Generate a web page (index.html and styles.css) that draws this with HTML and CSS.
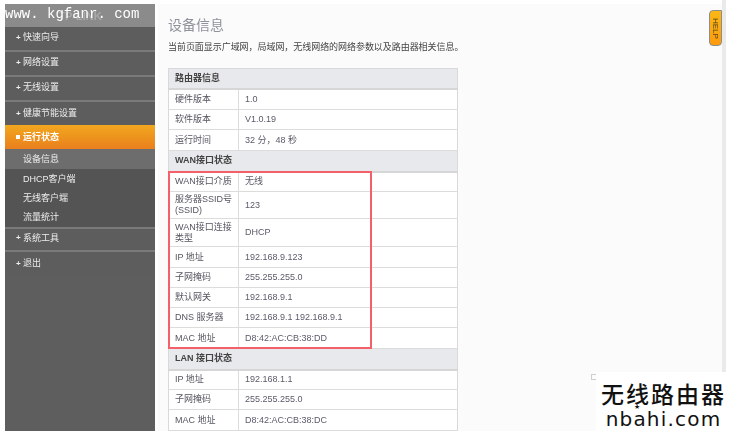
FILE: index.html
```html
<!DOCTYPE html>
<html lang="zh-CN">
<head>
<meta charset="utf-8">
<title>设备信息</title>
<link rel="stylesheet" href="styles.css">
</head>
<body>
<div class="page">
  <nav class="sidebar">
    <div class="brand"><span class="brand-logo">TP-LINK</span></div>
    <a class="nav-item"><i class="plus">+</i>快速向导</a>
    <a class="nav-item"><i class="plus">+</i>网络设置</a>
    <a class="nav-item"><i class="plus">+</i>无线设置</a>
    <a class="nav-item short"><i class="plus">+</i>健康节能设置</a>
    <a class="nav-item active"><i class="square"></i>运行状态</a>
    <a class="sub-item current">设备信息</a>
    <div class="sub-list">
      <a class="sub-item">DHCP客户端</a>
      <a class="sub-item">无线客户端</a>
      <a class="sub-item">流量统计</a>
    </div>
    <a class="nav-item tools"><i class="plus">+</i>系统工具</a>
    <a class="nav-item last"><i class="plus">+</i>退出</a>
  </nav>
  <main class="content">
    <h1 class="title">设备信息</h1>
    <p class="desc">当前页面显示广域网，局域网，无线网络的网络参数以及路由器相关信息。</p>
    <table class="info">
      <colgroup><col class="col-key"><col></colgroup>
      <tr class="head h20"><th colspan="2">路由器信息</th></tr>
      <tr class="h21"><td>硬件版本</td><td>1.0</td></tr>
      <tr class="h20"><td>软件版本</td><td>V1.0.19</td></tr>
      <tr class="h21"><td>运行时间</td><td>32 分，48 秒</td></tr>
      <tr class="head h21"><th colspan="2">WAN接口状态</th></tr>
      <tr class="h20"><td>WAN接口介质</td><td>无线</td></tr>
      <tr class="h27"><td>服务器SSID号<br>(SSID)</td><td>123</td></tr>
      <tr class="h28"><td>WAN接口连接<br>类型</td><td>DHCP</td></tr>
      <tr class="h21"><td>IP 地址</td><td>192.168.9.123</td></tr>
      <tr class="h20"><td>子网掩码</td><td>255.255.255.0</td></tr>
      <tr class="h20"><td>默认网关</td><td>192.168.9.1</td></tr>
      <tr class="h20"><td>DNS 服务器</td><td>192.168.9.1 192.168.9.1</td></tr>
      <tr class="h21"><td>MAC 地址</td><td>D8:42:AC:CB:38:DD</td></tr>
      <tr class="head h21"><th colspan="2">LAN 接口状态</th></tr>
      <tr class="h20"><td>IP 地址</td><td>192.168.1.1</td></tr>
      <tr class="h20"><td>子网掩码</td><td>255.255.255.0</td></tr>
      <tr class="h21"><td>MAC 地址</td><td>D8:42:AC:CB:38:DC</td></tr>
    </table>
  </main>
  <div class="strip"></div>
</div>
<div class="watermark">www. kgfanr. com</div>
<div class="highlight"></div>
<div class="help"><span>HELP</span></div>
<div class="checkbox"></div>
<div class="logo">
  <div class="logo-cn">无线路由器</div>
  <div class="logo-en">nbahi.com<span class="logo-star">★</span></div>
</div>
</body>
</html>
```
FILE: styles.css
```css
* { box-sizing: border-box; }
html, body { margin: 0; padding: 0; }
body {
  width: 731px;
  height: 434px;
  overflow: hidden;
  position: relative;
  background: #fff;
  font-family: "Liberation Sans", "Noto Sans CJK SC", sans-serif;
  font-size: 9px;
  color: #555;
  filter: blur(0.35px);
}
.page {
  display: flex;
  height: 434px;
  padding: 4px 0 3px 5px;
}
.sidebar {
  width: 150px;
  flex: none;
  display: flex;
  flex-direction: column;
  background: #5e5e5e;
  color: #ececec;
}
.brand {
  height: 23px;
  background: #8b8b8b;
  display: flex;
  align-items: center;
  justify-content: center;
  flex: none;
}
.brand-logo { color: #a9a9a9; font-size: 11px; font-weight: bold; }
.nav-item {
  height: 25px;
  flex: none;
  display: flex;
  align-items: center;
  padding: 0 0 2px 11px;
  background: #5d5d5d;
  border-bottom: 2px solid #7a7a7a;
  line-height: 1;
}
.nav-item.short { height: 23px; border-bottom: 0; padding-bottom: 0; }
.plus {
  width: 7px;
  font-style: normal;
  font-weight: bold;
  font-size: 8px;
  color: #eee;
}
.square {
  width: 4px;
  height: 4px;
  margin-right: 3px;
  background: #fff;
}
.nav-item.active {
  height: 24px;
  border-bottom: 0;
  padding-bottom: 0;
  background: linear-gradient(#f2a81e, #e97f1d);
  color: #fff;
  font-weight: bold;
}
.sub-item {
  height: 19px;
  display: flex;
  align-items: center;
  padding-left: 18px;
}
.sub-item.current {
  height: 20px;
  flex: none;
  padding-bottom: 2px;
  background: #6d6d6d;
}
.sub-list {
  background: #545454;
  height: 58px;
  flex: none;
}
.nav-item.tools { border-top: 2px solid #7a7a7a; height: 25px; padding-bottom: 3px; }
.nav-item.last { border-bottom: 0; height: 23px; padding-bottom: 0; }
.content {
  width: 564px;
  margin-left: 3px;
  flex: none;
  background: #fbfbfb;
  padding: 0 0 0 10px;
}
.title {
  margin: 12px 0 0;
  font-size: 14px;
  line-height: 18px;
  font-weight: normal;
  color: #8f929a;
}
.desc {
  margin: 7px 0 0;
  line-height: 12px;
  color: #444;
  letter-spacing: -0.05px;
  white-space: nowrap;
}
.info {
  margin-top: 15px;
  width: 290px;
  border-collapse: collapse;
  table-layout: fixed;
  background: #fff;
  border: 1px solid #d9d9d9;
}
.col-key { width: 70px; }
.info th, .info td {
  padding: 0 0 0 6px;
  font-weight: normal;
  text-align: left;
  line-height: 11px;
  border-bottom: 1px solid #dcdcdc;
}
.info td:first-child { border-right: 1px solid #dcdcdc; color: #555560; }
.info td + td { color: #5b5b6a; }
.info .head th {
  background: #e8e9ec;
  font-weight: bold;
  color: #444;
  border-bottom: 2px solid #d6d6d6;
}
.h20 { height: 20px; }
.h21 { height: 21px; }
.h27 { height: 27px; }
.h28 { height: 28px; }
.strip {
  width: 4px;
  flex: none;
  margin: -4px 0 -3px;
  background: #eaeaea;
}
.watermark {
  position: absolute;
  left: 5px;
  top: 6px;
  font-family: "Liberation Mono", monospace;
  font-size: 14px;
  line-height: 17px;
  color: #fff;
  white-space: nowrap;
}
.highlight {
  position: absolute;
  left: 168px;
  top: 171px;
  width: 204px;
  height: 178px;
  border: 2px solid #f4606a;
}
.help {
  position: absolute;
  left: 709px;
  top: 10px;
  width: 13px;
  height: 36px;
  border: 1px solid #8d8d8d;
  border-radius: 4px 0 4px 4px;
  background: linear-gradient(#fbb816, #fd9a0c);
  display: flex;
  align-items: center;
  justify-content: center;
}
.help span {
  writing-mode: vertical-rl;
  font-size: 8px;
  color: #4f431c;
}
.checkbox {
  position: absolute;
  left: 591px;
  top: 374px;
  width: 6px;
  height: 6px;
  border: 1px solid #cfcfcf;
}
.logo {
  position: absolute;
  left: 596px;
  top: 372px;
  width: 135px;
  height: 62px;
  background: #fff;
  color: #111;
  text-align: center;
}
.logo-cn {
  margin-top: 7px;
  font-family: "Noto Sans CJK SC", sans-serif;
  font-weight: 500;
  font-size: 23px;
  line-height: 28px;
  letter-spacing: 2px;
}
.logo-en {
  position: relative;
  margin-top: 1px;
  font-family: "DejaVu Sans", sans-serif;
  font-size: 20px;
  line-height: 22px;
  letter-spacing: 1.2px;
}
.logo-star {
  position: absolute;
  left: 38px;
  top: -5px;
  font-size: 7px;
  line-height: 8px;
  letter-spacing: 0;
}
```
